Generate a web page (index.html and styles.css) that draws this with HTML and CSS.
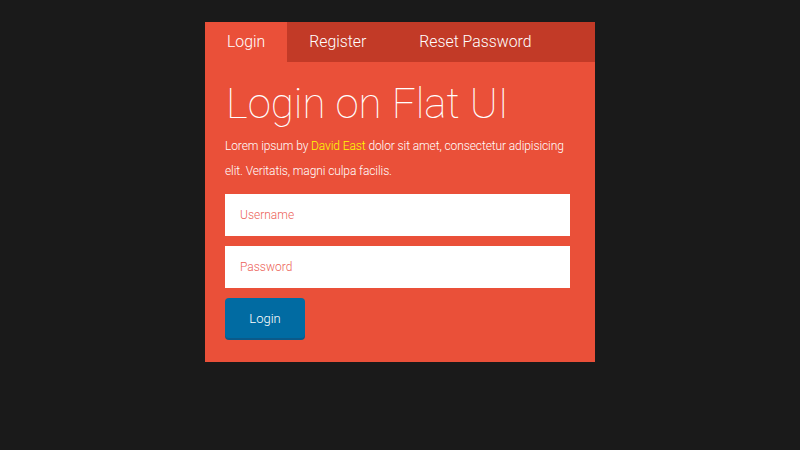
FILE: index.html
```html
<!DOCTYPE html>
<html lang="en">
<head>
    <meta charset="UTF-8">
    <title>Login on Flat UI</title>
    <link rel="stylesheet" href="styles.css">
</head>
<body>
    <div class="card">
        <ul class="tabs">
            <li class="tab active">Login</li>
            <li class="tab">Register</li>
            <li class="tab tab-reset">Reset Password</li>
        </ul>
        <div class="content">
            <h1>Login on Flat UI</h1>
            <p>Lorem ipsum by <a href="#">David East</a> dolor sit amet, consectetur adipisicing elit. Veritatis, magni culpa facilis.</p>
            <form class="login-form">
                <input type="text" placeholder="Username">
                <input type="password" placeholder="Password">
                <button type="button">Login</button>
            </form>
        </div>
    </div>
</body>
</html>
```

FILE: styles.css
```css
* {
    margin: 0;
    padding: 0;
    box-sizing: border-box;
    font-family: Roboto, "Liberation Sans", sans-serif;
}
body {
    background-color: #1a1a1a;
    padding-top: 22px;
}
.card {
    width: 390px;
    margin: 0 auto;
    background-color: #ea5039;
    padding-bottom: 22px;
}
.tabs {
    list-style: none;
    display: flex;
    background-color: #c23a27;
    height: 40px;
}
.tab {
    padding: 0 22px;
    line-height: 40px;
    font-size: 15.8px;
    font-weight: 300;
    color: #fff;
}
.tab.active {
    background-color: #ea5039;
}
.tab-reset {
    margin-left: 9px;
}
.content {
    padding: 0 20px;
}
h1 {
    font-size: 42px;
    font-weight: 100;
    color: #fff;
    margin: 16px 0 0 1px;
    line-height: 52px;
}
p {
    font-size: 12px;
    font-weight: 300;
    color: #fff;
    line-height: 25px;
    margin-top: 4px;
    letter-spacing: -0.1px;
}
a {
    color: #ffff00;
    text-decoration: none;
}
.login-form {
    margin-top: 10px;
    display: flex;
    flex-direction: column;
    align-items: flex-start;
    gap: 10px;
}
input {
    width: 345px;
    height: 42px;
    border: none;
    outline: none;
    background: #fff;
    padding: 0 15px;
    font-size: 12px;
    font-weight: 300;
    color: #333;
}
input::placeholder {
    color: #ec5f58;
}
button {
    width: 80px;
    height: 40px;
    margin-bottom: 2px;
    border: none;
    border-radius: 4px;
    background-color: #016ba2;
    box-shadow: 0 2px 0 #0a5a8a;
    color: #fff;
    font-size: 13px;
    font-weight: 300;
    cursor: pointer;
}
```
